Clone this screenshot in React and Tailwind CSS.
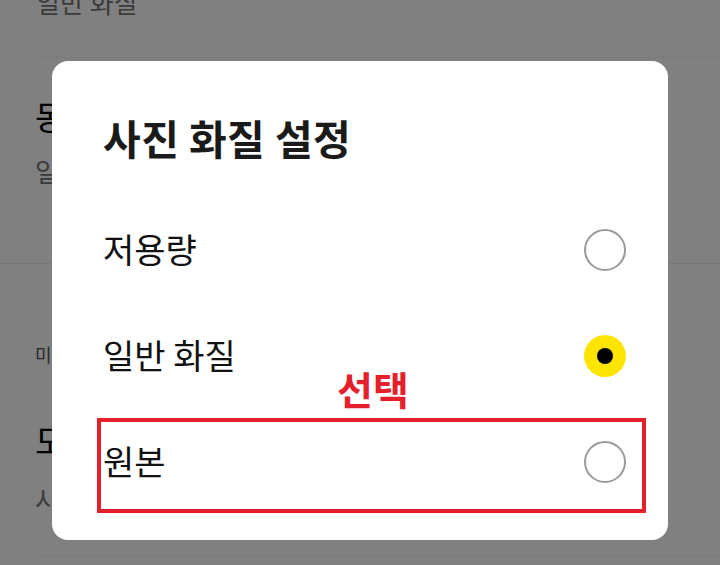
const FONT = "font-['Noto_Sans_CJK_KR','Noto_Sans',sans-serif]";

const options = [
  { label: "저용량", selected: false },
  { label: "일반 화질", selected: true },
  { label: "원본", selected: false, marked: true },
];

function Radio({ selected }) {
  if (selected) {
    return (
      <span className="flex h-[42px] w-[42px] items-center justify-center rounded-full bg-[#fee500]">
        <span className="h-4 w-4 rounded-full bg-black" />
      </span>
    );
  }
  return <span className="h-[42px] w-[42px] rounded-full border-[2.5px] border-[#9a9a9a]" />;
}

export default function App() {
  return (
    <div className={`relative h-[565px] w-[720px] overflow-hidden bg-[#808080] ${FONT}`}>
      {/* dimmed settings page behind the dialog */}
      <div className="flex flex-col">
        <div className="mt-[-17px] pl-[36px] text-[26px] leading-[37px] text-[#3b3b3b]">일반 화질</div>
        <div className="ml-[35px] mt-[37px] h-px bg-[#7a7a7a]" />
        <div className="pl-[35px] pt-[36px] text-[33px] leading-[44px] text-black">동영상 화질</div>
        <div className="pl-[35px] pt-[16px] text-[26px] leading-[34px] text-[#3b3b3b]">일반 화질</div>
        <div className="mt-[75px] h-px bg-[#777777]" />
        <div className="pl-[35px] pt-[78px] text-[18px] leading-[24px] text-[#2a2a2a]">미디어</div>
        <div className="pl-[35px] pt-[52px] text-[33px] leading-[44px] text-black">도움말</div>
        <div className="pl-[35px] pt-[20px] text-[26px] leading-[34px] text-[#3b3b3b]">사진 전송</div>
        <div className="ml-[35px] mt-[39px] h-px bg-[#7a7a7a]" />
      </div>

      {/* dialog */}
      <div className="absolute left-[52px] top-[61px] flex h-[479px] w-[616px] flex-col rounded-[16px] bg-white pl-[51px] pr-[42px] pt-[49px]">
        <h1 className="text-[41px] font-bold leading-[54px] tracking-[0.01em] text-[#1a1a1a]">사진 화질 설정</h1>
        <div className="mt-[33px] flex flex-col">
          {options.map((o) => (
            <div key={o.label} className="flex h-[106px] items-center justify-between">
              <span className="pb-[3px] text-[34px] leading-[46px] text-[#111111]">{o.label}</span>
              <Radio selected={o.selected} />
            </div>
          ))}
        </div>
      </div>

      {/* annotation */}
      <div className="absolute left-[97px] top-[418px] h-[95px] w-[549px] border-4 border-[#e3202b]" />
      <div className="absolute left-[337px] top-[362px] text-[39px] font-bold leading-[52px] text-[#e3202b]">선택</div>
    </div>
  );
}
